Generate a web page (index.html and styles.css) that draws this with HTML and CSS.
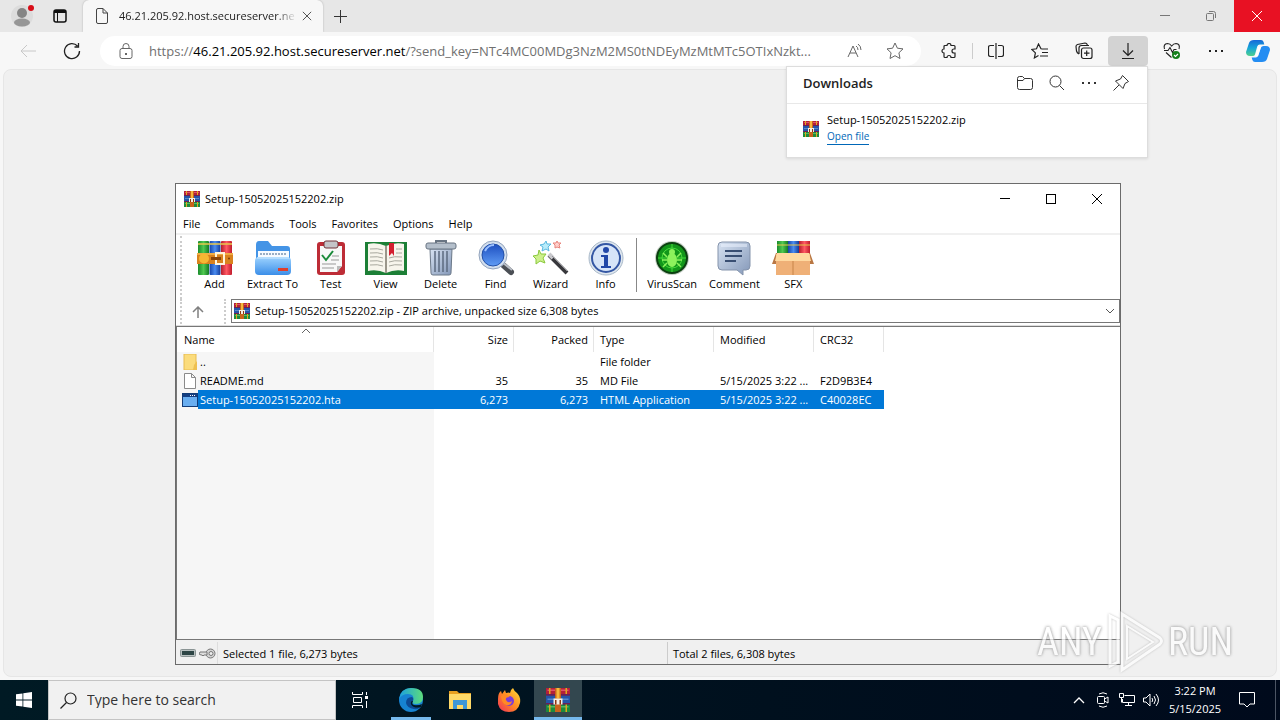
FILE: index.html
```html
<!DOCTYPE html>
<html lang="en">
<head>
    <meta charset="UTF-8">
    <meta name="viewport" content="width=device-width, initial-scale=1.0">
    <title>Setup-15052025152202.zip</title>
    <link rel="stylesheet" href="styles.css">
</head>
<body>

    <!-- Shared icons -->
    <svg class="defs" aria-hidden="true">
        <defs>
            <linearGradient id="gBlue" x1="0" y1="0" x2="0" y2="1"><stop offset="0" stop-color="#9dd3ff"/><stop offset="1" stop-color="#3b8ee8"/></linearGradient>
            <linearGradient id="gSteel" x1="0" y1="0" x2="1" y2="1"><stop offset="0" stop-color="#d8e3f2"/><stop offset="1" stop-color="#8397b8"/></linearGradient>
            <linearGradient id="gLens" x1="0" y1="0" x2="0" y2="1"><stop offset="0" stop-color="#1d4fc0"/><stop offset="1" stop-color="#5f9cf5"/></linearGradient>
            <linearGradient id="gRed" x1="0" y1="0" x2="1" y2="0"><stop offset="0" stop-color="#b51c2c"/><stop offset=".5" stop-color="#ff5964"/><stop offset="1" stop-color="#c01c2c"/></linearGradient>
            <linearGradient id="gGreen" x1="0" y1="0" x2="1" y2="0"><stop offset="0" stop-color="#1a8c2c"/><stop offset=".5" stop-color="#50c850"/><stop offset="1" stop-color="#137a24"/></linearGradient>
            <linearGradient id="gBook" x1="0" y1="0" x2="1" y2="0"><stop offset="0" stop-color="#1644a8"/><stop offset=".5" stop-color="#4a8cf0"/><stop offset="1" stop-color="#143c98"/></linearGradient>
            <linearGradient id="gEdge" x1="0" y1="0" x2="1" y2="0"><stop offset="0" stop-color="#1a9fe0"/><stop offset="1" stop-color="#5ddc7c"/></linearGradient>
            <linearGradient id="gFire" x1="1" y1="0" x2="0" y2="1"><stop offset="0" stop-color="#ffe23a"/><stop offset=".5" stop-color="#ff8a22"/><stop offset="1" stop-color="#f02c5c"/></linearGradient>
            <linearGradient id="gPilot" x1="0" y1="0" x2="0" y2="1"><stop offset="0" stop-color="#1668d8"/><stop offset=".5" stop-color="#16a6d8"/><stop offset="1" stop-color="#4fd08c"/></linearGradient>
        </defs>
        <symbol id="rar" viewBox="0 0 16 16">
            <path fill="#b3203a" d="M0 0h16v5H0z"/><path fill="#e0526a" d="M1 1h14v1H1z"/>
            <path fill="#2455a8" d="M0 5h16v6H0z"/><path fill="#5a87cc" d="M1 7h14v1H1z"/>
            <path fill="#1d8a3c" d="M0 11h16v5H0z"/><path fill="#55b860" d="M1 12h14v1H1z"/>
            <path fill="#6b1f56" d="M0 4h16v1H0zM0 10h16v1H0z"/>
            <path fill="#e0a81c" d="M2 0h1v4H2zM13 0h1v4h-1zM2 11h1v5H2zM13 11h1v5h-1z"/>
            <path fill="#c8641c" d="M6 0h4v16H6z"/><path fill="#f6b83c" d="M7 0h2v7H7z"/>
            <path fill="#f4efe4" d="M5 7h6v4H5z"/><path fill="#8a3410" d="M6 8h1v3H6zM9 8h1v3H9z"/>
        </symbol>
        <symbol id="close" viewBox="0 0 12 12"><path d="M1 1l10 10M11 1L1 11" fill="none" stroke="currentColor"/></symbol>
        <symbol id="minimize" viewBox="0 0 12 12"><path d="M1 5.500h10" fill="none" stroke="currentColor"/></symbol>
        <symbol id="dots" viewBox="0 0 14 14"><path d="M0 6h2v2H0zM6 6h2v2H6zM12 6h2v2h-2z" fill="currentColor"/></symbol>
        <symbol id="loupe" viewBox="0 0 16 16"><path d="M1 6.500a5.500 5.500 0 1 0 11 0 5.500 5.500 0 1 0-11 0M10.500 10.500L15 15" fill="none" stroke="currentColor"/></symbol>
    </svg>

    <!-- Browser -->
    <div class="browser">
        <header class="tab-bar">
            <button class="profile" aria-label="Profile">
                <svg width="24" height="24" viewBox="0 0 24 24"><circle cx="12" cy="12" r="11" fill="#dcdcdc"/><circle cx="12" cy="9" r="5" fill="#858585"/><ellipse cx="12" cy="18.500" rx="8" ry="4" fill="#969696"/><circle cx="21" cy="4" r="3" fill="#d80d18"/></svg>
            </button>
            <button class="workspaces" aria-label="Tab actions">
                <svg width="14" height="14" viewBox="0 0 14 14"><rect x="1" y="1" width="12" height="12" rx="2" fill="none" stroke="#111" stroke-width="1.500"/><path d="M1 1h12v3H1z" fill="#111"/><path d="M4.500 4v9" stroke="#111"/></svg>
            </button>
            <div class="tab">
                <svg width="12" height="16" viewBox="0 0 12 16"><path d="M2 .5h5L11.500 5v9q0 1.500-1.500 1.500H2q-1.500 0-1.500-1.500V2Q.5.5 2 .5zM7 .5V5h4.500" fill="none" stroke="#444"/></svg>
                <span class="tab-title">46.21.205.92.host.secureserver.ne</span>
                <button class="tab-close" aria-label="Close tab"><svg width="10" height="10"><use href="#close"/></svg></button>
            </div>
            <button class="new-tab" aria-label="New tab"><svg width="13" height="13" viewBox="0 0 13 13"><path d="M6.500 0v13M0 6.500h13" stroke="#333"/></svg></button>
            <div class="window-buttons">
                <button aria-label="Minimize"><svg width="12" height="12"><use href="#minimize"/></svg></button>
                <button aria-label="Restore"><svg width="10" height="10" viewBox="0 0 10 10" fill="none" stroke="currentColor"><rect x=".5" y="2.500" width="7" height="7" rx="1"/><path d="M3 .5h4.500q2 0 2 2V7"/></svg></button>
                <button class="close-red" aria-label="Close"><svg width="12" height="12"><use href="#close"/></svg></button>
            </div>
        </header>

        <nav class="toolbar">
            <button class="tool back" aria-label="Back" disabled><svg width="16" height="14" viewBox="0 0 16 14" fill="none" stroke="currentColor"><path d="M16 7H1M7 1L1 7l6 6"/></svg></button>
            <button class="tool reload" aria-label="Reload"><svg width="18" height="18" viewBox="0 0 18 18" fill="none" stroke="currentColor" stroke-width="1.300"><path d="M16.500 9A7.500 7.500 0 1 1 14.500 4M15.500 1v4h-4"/></svg></button>
            <div class="address">
                <svg width="14" height="16" viewBox="0 0 14 16" fill="none" stroke="#666"><rect x="1" y="5.500" width="12" height="10" rx="2"/><path d="M4 5.500V3.500a3 3 0 0 1 6 0v2"/><path d="M6 10h2v2H6z" fill="#666" stroke="none"/></svg>
                <a class="url" href="#">https://<b>46.21.205.92.host.secureserver.net</b>/?send_key=NTc4MC00MDg3NzM2MS0tNDEyMzMtMTc5OTIxNzkt...</a>
                <button class="in-address" aria-label="Read aloud"><svg width="16" height="16" viewBox="0 0 16 16" fill="none" stroke="#666"><path d="M1 14L6 3l5 11M3 10h6M9 3q2 1 2 4M11 1q3 2 3 6"/></svg></button>
                <button class="in-address" aria-label="Add to favorites"><svg width="18" height="18" viewBox="0 0 18 18" fill="none" stroke="#666"><path d="M9 1l2.400 5.200 5.600.7-4.100 3.900 1.100 5.700L9 13.700l-5 2.800 1.100-5.700L1 6.900l5.600-.7z"/></svg></button>
            </div>
            <button class="tool" aria-label="Extensions"><svg width="16" height="16" viewBox="0 0 16 16" fill="none" stroke="currentColor" stroke-width="1.200"><path d="M4 2.500h2a2 2 0 0 1 4 0h3q1 0 1 1V6h-1a2 2 0 0 0 0 4h1v3.500q0 1-1 1h-3a2 2 0 0 0-4 0H4q-1 0-1-1V10a2 2 0 0 1 0-4V3.500q0-1 1-1z"/></svg></button>
            <span class="divider"></span>
            <button class="tool" aria-label="Split screen"><svg width="16" height="16" viewBox="0 0 16 16" fill="none" stroke="currentColor" stroke-width="1.200"><path d="M6 2.500H2.500Q.5 2.500.5 4.500v7q0 2 2 2H6M10 2.500h3.500q2 0 2 2v7q0 2-2 2H10M8 0v16"/></svg></button>
            <button class="tool" aria-label="Favorites"><svg width="18" height="16" viewBox="0 0 18 16" fill="none" stroke="currentColor" stroke-width="1.200"><path d="M11 6l-1-.2L7.500 1 5.500 5.800.8 6.500l3.600 3.400-1 5L7.500 12.500M11 6h6M11 9.500h6M9 13h8"/></svg></button>
            <button class="tool" aria-label="Collections"><svg width="18" height="18" viewBox="0 0 18 18" fill="none" stroke="currentColor" stroke-width="1.200"><rect x="6.500" y="6" width="10.500" height="10.500" rx="2"/><path d="M11.700 8.500v5.500M9 11.200h5.500M4 12Q2 11 1.500 9L1 4.500q0-1.500 1.500-2L10 1q2 0 2.500 2.500M4 12V6q0-2.500 2.500-2.500H14"/></svg></button>
            <button class="tool active" aria-label="Downloads"><svg width="14" height="18" viewBox="0 0 14 18" fill="none" stroke="currentColor" stroke-width="1.200"><path d="M7 1v12M2 8.500l5 5 5-5M1 16.500h12"/></svg></button>
            <button class="tool" aria-label="Browser essentials"><svg width="18" height="18" viewBox="0 0 18 18" fill="none" stroke="currentColor" stroke-width="1.100"><path d="M1.500 7Q0 2 4.500 1.500 7 1.500 8.700 4 10.500 1.500 13 1.500 17.500 2 16 7M1 8.500h4l2-3 2.500 5 1.500-3h2.500M3 10.500l5.500 5"/><circle cx="13" cy="13" r="4" fill="#15801c" stroke="none"/><path d="M11 13l1.500 1.500L15 12" stroke="#fff"/></svg></button>
            <button class="tool" aria-label="Settings and more"><svg width="14" height="14"><use href="#dots"/></svg></button>
            <button class="tool" aria-label="Copilot"><svg width="24" height="24" viewBox="0 0 24 24"><path d="M8 1h7q2 0 2.600 2l.7 2.500h-4.500q-2 0-2.600 2L9 15.500Q8.400 17 6.500 17H4Q0 17 0 13L3 4Q4 1 8 1z" fill="url(#gPilot)"/><path d="M16 23H9q-2 0-2.600-2l-.7-2.500h4q2 0 2.600-2L15 8.500Q15.600 7 17.500 7H20q4 0 4 4l-3 9q-1 3-5 3z" fill="#248df2"/><path d="M12 8h3l-3 9H9z" fill="#fff" opacity=".8"/></svg></button>
        </nav>

        <main class="page"></main>
    </div>

    <!-- Downloads flyout -->
    <section class="downloads">
        <div class="downloads-head">
            <h2>Downloads</h2>
            <button aria-label="Open downloads folder"><svg width="16" height="14" viewBox="0 0 16 14" fill="none" stroke="currentColor"><path d="M.5 2.500q0-2 2-2h3l2 2h6q2 0 2 2v7q0 2-2 2h-11q-2 0-2-2zM.5 4.500H6l1.500-2"/></svg></button>
            <button aria-label="Search downloads"><svg width="16" height="16"><use href="#loupe"/></svg></button>
            <button aria-label="More options"><svg width="14" height="14"><use href="#dots"/></svg></button>
            <button aria-label="Pin downloads"><svg width="16" height="16" viewBox="0 0 16 16" fill="none" stroke="currentColor"><path d="M9.500.5l6 6-3.500 2-2 5L2.500 6l5-2zM6 10L.5 15.500"/></svg></button>
        </div>
        <div class="download-item">
            <svg width="16" height="16"><use href="#rar"/></svg>
            <div>
                <p>Setup-15052025152202.zip</p>
                <a href="#">Open file</a>
            </div>
        </div>
    </section>

    <!-- Archive window -->
    <section class="archive">
        <div class="title-bar">
            <svg width="16" height="16"><use href="#rar"/></svg>
            <span>Setup-15052025152202.zip</span>
            <div class="window-buttons">
                <button aria-label="Minimize"><svg width="12" height="12"><use href="#minimize"/></svg></button>
                <button aria-label="Maximize"><svg width="10" height="10" viewBox="0 0 10 10"><rect x=".5" y=".5" width="9" height="9" fill="none" stroke="currentColor"/></svg></button>
                <button aria-label="Close"><svg width="12" height="12"><use href="#close"/></svg></button>
            </div>
        </div>
        <div class="menu">
            <button>File</button><button>Commands</button><button>Tools</button><button>Favorites</button><button>Options</button><button>Help</button>
        </div>
        <div class="bands">
            <div class="actions">
                <button>
                    <svg width="36" height="36" viewBox="0 0 36 36"><rect x="1" y="1" width="11" height="34" rx="1" fill="url(#gGreen)"/><rect x="12.500" y="1" width="11" height="34" rx="1" fill="url(#gBook)"/><rect x="24" y="1" width="11" height="34" rx="1" fill="url(#gRed)"/><path d="M1 4h34" stroke="#e8c84c" stroke-width="1.500"/><path d="M0 13h36v11H0z" fill="#d9821e"/><path d="M0 13h36v2H0z" fill="#f0ac44"/><circle cx="7" cy="18.500" r="5" fill="#f7b733"/><rect x="19" y="13" width="8" height="11" fill="none" stroke="#fff4dc" stroke-width="2"/><path d="M14 17h10v3H14z" fill="#8a4408"/><circle cx="32" cy="18.500" r="1" fill="#7a3c08"/></svg>
                    Add
                </button>
                <button>
                    <svg width="38" height="36" viewBox="0 0 38 36"><path d="M2 5q0-4 3-4h9l4 5h15q3 0 3 3v20H2z" fill="#4494e6"/><path d="M4 11h31v10H4z" fill="#f7fbff"/><path d="M6 14h27" stroke="#9aaec4" stroke-width="2" stroke-dasharray="2 1"/><rect x="1" y="17" width="36" height="18" rx="4" fill="url(#gBlue)"/><path d="M3 18h32" stroke="#d2ecff"/><rect x="24" y="28" width="10" height="3" fill="#df3f2c"/></svg>
                    Extract To
                </button>
                <button>
                    <svg width="30" height="36" viewBox="0 0 30 36"><rect x="1" y="2" width="28" height="33" rx="3" fill="#bd2c36"/><path d="M4 6h22v20l-5 6H4z" fill="#f8f8f8"/><path d="M26 26l-5 6v-6z" fill="#bbb"/><rect x="8" y="1" width="14" height="7" rx="2" fill="#c4c4c8" stroke="#70353a"/><path d="M6 15l4 5 7-9" fill="none" stroke="#1a8a3a" stroke-width="2"/><path d="M16 16h7M15 20h8M6 24h14M6 28h12" stroke="#999"/></svg>
                    Test
                </button>
                <button>
                    <svg width="44" height="36" viewBox="0 0 44 36"><path d="M1 2h42v33H1z" fill="#1c7f36"/><path d="M4 4q9-2 18 2 9-4 18-2v27q-9-2-18 2-9-4-18-2z" fill="#f7f5ec"/><path d="M22 6v27" stroke="#9a968a" stroke-width="2"/><path d="M6 9q8-1 13 1M6 13q8-1 13 1M6 17q8-1 13 1M6 21q8-1 13 1M6 25q8-1 13 1M38 9q-4 0-6 0M38 13q-4 0-6 0M38 17q-8-1-13 1M38 21q-8-1-13 1M38 25q-8-1-13 1" fill="none" stroke="#a8a89e"/><path d="M25 3h5v13l-2-3-3 3z" fill="#d32030"/></svg>
                    View
                </button>
                <button>
                    <svg width="32" height="36" viewBox="0 0 32 36"><path d="M5 9h22l-1 24q0 2-2 2H8q-2 0-2-2z" fill="url(#gSteel)" stroke="#6b7888"/><path d="M10 11v21M14 11v21M18 11v21M22 11v21" stroke="#5c6b80" stroke-width="1.500"/><rect x="1" y="3" width="30" height="6" rx="2" fill="#b4bfcb" stroke="#697583"/><path d="M11 3V1h10v2" fill="none" stroke="#697583" stroke-width="2"/></svg>
                    Delete
                </button>
                <button>
                    <svg width="38" height="36" viewBox="0 0 38 36"><path d="M25 24l9 8" stroke="#4b4f55" stroke-width="6" stroke-linecap="round"/><path d="M25 22l10 8" stroke="#b9bec6" stroke-width="2"/><circle cx="16" cy="15" r="14" fill="#d3dfee" stroke="#93a4bd"/><circle cx="16" cy="15" r="11" fill="url(#gLens)" stroke="#2350a8"/><path d="M8 11q3-6 9-6" fill="none" stroke="#9bc0ff" stroke-width="2"/></svg>
                    Find
                </button>
                <button>
                    <svg width="36" height="36" viewBox="0 0 36 36"><path d="M16 15l18 18" stroke="#38383c" stroke-width="4"/><path d="M16 14l4 4" stroke="#c8c8cc" stroke-width="4"/><path d="M19 16l15 15" stroke="#909094"/><path d="M6 10l2 4 5 0-3 4 2 5-5-2-4 3 0-5-3-3 5-1z" fill="#cdf08c" stroke="#8ac83c"/><path d="M13 1l1 3 4 0-3 3 1 4-3-2-4 2 1-4-3-2 4-1z" fill="#b8ecfa" stroke="#5ab8e0"/><path d="M24 1l1 2h3l-2 2 1 3-3-1-2 1v-3l-2-2h3z" fill="#ffd0cc" stroke="#e8847c"/></svg>
                    Wizard
                </button>
                <button>
                    <svg width="36" height="36" viewBox="0 0 36 36"><circle cx="18" cy="18" r="17" fill="#dfe7ef" stroke="#a8b8c8"/><circle cx="18" cy="18" r="14" fill="#d6e4f8" stroke="#3457a4" stroke-width="2"/><circle cx="18" cy="10" r="3" fill="#2147a8"/><path d="M13 15h7v11h3v2H13v-2h3v-9h-3z" fill="#2147a8"/></svg>
                    Info
                </button>
                <span class="rule"></span>
                <button>
                    <svg width="36" height="36" viewBox="0 0 36 36"><circle cx="18" cy="18" r="17" fill="#c4ccc4"/><circle cx="18" cy="18" r="15" fill="#12961a" stroke="#0b4010" stroke-width="2"/><circle cx="18" cy="18" r="10" fill="none" stroke="#46d93c"/><path d="M18 4v28M4 18h28" stroke="#46d93c"/><ellipse cx="18" cy="20" rx="5" ry="7" fill="#8cf25c"/><circle cx="18" cy="12" r="3" fill="#8cf25c"/><path d="M13 17l-4-4M23 17l4-4M13 20H8M23 20h5M13 23l-4 4M23 23l4 4" stroke="#8cf25c" stroke-width="1.500"/></svg>
                    VirusScan
                </button>
                <button>
                    <svg width="34" height="36" viewBox="0 0 34 36"><path d="M5 2h24q4 0 4 4v20q0 4-4 4h-3v5l-6-5H5q-4 0-4-4V6q0-4 4-4z" fill="url(#gSteel)" stroke="#8493ab"/><path d="M4 4h26v3H4z" fill="#edf4ff" opacity=".5"/><path d="M8 11h17M8 16h17M8 21h11" stroke="#394e72" stroke-width="2"/></svg>
                    Comment
                </button>
                <button>
                    <svg width="42" height="36" viewBox="0 0 42 36"><path d="M5 1h11v13H5z" fill="url(#gGreen)"/><path d="M16 1h11v13H16z" fill="url(#gBook)"/><path d="M27 1h11v13H27z" fill="url(#gRed)"/><path d="M5 5h33" stroke="#e8c84c"/><path d="M4 13h34l4 11h-4L37 14 5 14 4 24H0z" fill="#b97744"/><path d="M4 14h34v21H4z" fill="#efb077"/><path d="M5 13h32l2 8H3z" fill="#ffd9a0"/><path d="M21 21v14" stroke="#c88448"/></svg>
                    SFX
                </button>
            </div>
            <div class="path-row">
                <button class="up" aria-label="Up one level"><svg width="12" height="12" viewBox="0 0 12 12" fill="none" stroke="#808080" stroke-width="1.500"><path d="M6 12V1M1 6l5-5 5 5"/></svg></button>
                <div class="path">
                    <svg width="16" height="16"><use href="#rar"/></svg>
                    <select aria-label="Current path"><option>Setup-15052025152202.zip - ZIP archive, unpacked size 6,308 bytes</option></select>
                    <svg width="10" height="6" viewBox="0 0 10 6"><path d="M1 1l4 4 4-4" fill="none" stroke="#555"/></svg>
                </div>
            </div>
        </div>
        <div class="list">
            <table>
                <colgroup><col class="c-name"><col class="c-size"><col class="c-size"><col class="c-type"><col class="c-date"><col class="c-crc"></colgroup>
                <thead>
                    <tr><th>Name<svg class="sort" width="10" height="6" viewBox="0 0 10 6"><path d="M1 5l4-4 4 4" fill="none" stroke="#666"/></svg></th><th class="num">Size</th><th class="num">Packed</th><th>Type</th><th>Modified</th><th>CRC32</th></tr>
                </thead>
                <tbody>
                    <tr>
                        <td><span class="file"><svg width="16" height="16" viewBox="0 0 16 16"><path d="M2 0h12v16H2z" fill="#fbdc7c" stroke="#e8bc50"/><path d="M12 11l3-4v9h-4z" fill="#eec050"/></svg><span class="file-name">..</span></span></td>
                        <td></td><td></td><td>File folder</td><td></td><td></td>
                    </tr>
                    <tr>
                        <td><span class="file"><svg width="16" height="16" viewBox="0 0 16 16"><path d="M2.500.5h7l4 4v11h-11zM9.500.5v4h4" fill="#fff" stroke="#8a8a8a"/></svg><span class="file-name">README.md</span></span></td>
                        <td class="num">35</td><td class="num">35</td><td>MD File</td><td>5/15/2025 3:22 ...</td><td>F2D9B3E4</td>
                    </tr>
                    <tr class="selected">
                        <td><span class="file"><svg width="16" height="14" viewBox="0 0 16 14"><rect x=".5" y=".5" width="15" height="13" fill="#69aef0" stroke="#123c78"/><path d="M1 1h14v3H1z" fill="#153f82"/><path d="M8 2h1v1H8zM10 2h1v1h-1zM12 2h1v1h-1z" fill="#fff"/></svg><span class="file-name">Setup-15052025152202.hta</span></span></td>
                        <td class="num">6,273</td><td class="num">6,273</td><td>HTML Application</td><td>5/15/2025 3:22 ...</td><td>C40028EC</td>
                    </tr>
                </tbody>
            </table>
        </div>
        <footer class="status">
            <div class="status-icons">
                <svg width="16" height="8" viewBox="0 0 16 8"><rect x=".5" y=".5" width="15" height="7" rx="1" fill="#b8c0c0" stroke="#8a9494"/><path d="M2 2h12v4H2z" fill="#2c4444"/></svg>
                <svg width="17" height="11" viewBox="0 0 17 11"><circle cx="11.500" cy="5.500" r="4.500" fill="#d4d4d4" stroke="#777"/><circle cx="12" cy="5.500" r="2" fill="#eee" stroke="#777"/><path d="M8 4H1L0 6l2 1h1l1 1 1-1h3z" fill="#ddd" stroke="#777"/></svg>
            </div>
            <span class="status-left">Selected 1 file, 6,273 bytes</span>
            <span class="status-right">Total 2 files, 6,308 bytes</span>
        </footer>
    </section>

    <!-- Watermark -->
    <div class="watermark">
        <span>ANY</span>
        <svg width="58" height="64" viewBox="0 0 58 64" fill="none" stroke="#fff"><path d="M4 56V6l8 4v42zM16 4l38 24q3 3 0 6L16 60z" stroke-width="3"/><path d="M21 16l26 16-26 17z" stroke-width="2"/></svg>
        <span>RUN</span>
    </div>

    <!-- Taskbar -->
    <footer class="taskbar">
        <button class="start" aria-label="Start"><svg width="16" height="16" viewBox="0 0 16 16" fill="#fff"><path d="M0 2.300L6.500 1.400v6.200H0zM7.300 1.300L16 0v7.600H7.300zM0 8.400h6.500v6.200L0 13.700zM7.300 8.400H16V16l-8.700-1.300z"/></svg></button>
        <label class="search">
            <svg width="17" height="17" viewBox="0 0 17 17" fill="none" stroke="#222" stroke-width="1.200"><circle cx="10.500" cy="6.500" r="5.500"/><path d="M6.500 10.500L.5 16.500"/></svg>
            <input type="text" placeholder="Type here to search" aria-label="Type here to search">
        </label>
        <button class="app" aria-label="Task view"><svg width="16" height="16" viewBox="0 0 16 16" fill="none" stroke="#fff"><path d="M.5 0v2.500h10V0M.5 16v-2.500h10V16M1.500 5.500h8v5h-8zM14.500 0v3M14.500 9v7"/><path d="M13 4h3v3h-3z" fill="#fff" stroke="none"/></svg></button>
        <button class="app running" aria-label="Edge"><svg width="24" height="24" viewBox="0 0 24 24"><circle cx="12" cy="12" r="12" fill="#1683d2"/><path d="M0 11Q2 0 12 0q12 0 12 9 0 7-7 7-5 0-3-3 2-7-5-7-6 0-9 5z" fill="url(#gEdge)"/><path d="M7 15q0-6 6-6 2 1 1 4-2 3 1 4 4 1 8 0-3 5-8 4-7-1-8-6z" fill="#0d4a94"/><path d="M14 13q-2 3 1 4 4 1 8-1l-1 3q-4 1-7 0-4-2-3-5 0-1 2-1z" fill="#001a24"/></svg></button>
        <button class="app" aria-label="File Explorer"><svg width="22" height="20" viewBox="0 0 22 20"><path d="M0 1h8l2 2h12v5H0z" fill="#e8a020"/><path d="M0 4h22v15H0z" fill="#ffd968"/><path d="M4 10h14v9h-4v-4H8v4H4z" fill="#3e97d8"/><path d="M8 15h6v4H8z" fill="#ffd968"/></svg></button>
        <button class="app" aria-label="Firefox"><svg width="24" height="24" viewBox="0 0 24 24"><path d="M1 11Q1 5 4 3l1 3 3-4 1 3q3-1 4 0 0-3 3-5 1 3 4 5 4 4 3 10-2 9-11 9T1 16z" fill="url(#gFire)"/><circle cx="12" cy="13" r="5" fill="#7b3cd8"/><path d="M4 8q5-3 9 1-5 0-4 3 2 4 6 1-1 5-6 4-4-1-5-9z" fill="#ff8a24"/></svg></button>
        <button class="app running current" aria-label="WinRAR"><svg width="24" height="24"><use href="#rar"/></svg></button>
        <div class="tray">
            <button aria-label="Show hidden icons"><svg width="12" height="8" viewBox="0 0 12 8" fill="none" stroke="#fff" stroke-width="1.300"><path d="M1 7l5-5 5 5"/></svg></button>
            <button aria-label="Meet now"><svg width="12" height="16" viewBox="0 0 12 16" fill="none" stroke="#fff"><rect x=".5" y="4.500" width="7" height="7" rx="1"/><path d="M7.500 7l3.500-2v6l-3.500-2M2 2q4-2.500 8 0M2 14q4 2.500 8 0"/></svg></button>
            <button aria-label="Network"><svg width="16" height="14" viewBox="0 0 16 14" fill="none" stroke="#fff"><path d="M5.500 2.500h10v7h-12V6M9.500 9.500v3M6 12.500h7M.5.5h4v4h-4zM2.500 4.500v5"/></svg></button>
            <button aria-label="Volume"><svg width="17" height="14" viewBox="0 0 17 14" fill="none" stroke="#fff"><path d="M.5 5h2.500l4-4v12l-4-4H.5zM9 5q1.500 2 0 4M11 3q3 4 0 8M13 1q5 6 0 12"/></svg></button>
            <button class="clock"><span>3:22 PM</span><span>5/15/2025</span></button>
            <button class="notify" aria-label="Notifications"><svg width="16" height="16" viewBox="0 0 16 16" fill="none" stroke="#fff"><path d="M.5.5h15v11.500H11l-3 3-3-3H.5z"/></svg></button>
        </div>
    </footer>

</body>
</html>
```
FILE: styles.css
```css
* {
    margin: 0;
    padding: 0;
    box-sizing: border-box;
}

body {
    height: 100vh;
    display: flex;
    flex-direction: column;
    position: relative;
    overflow: hidden;
    background: #f7f7f7;
    color: #000;
    font-family: "Open Sans", "Noto Sans", sans-serif;
    font-size: 11px;
    line-height: 16px;
}

button, input, select {
    font: inherit;
    color: inherit;
    background: none;
    border: none;
    outline: none;
}

button {
    display: flex;
    align-items: center;
    justify-content: center;
}

svg {
    flex-shrink: 0;
}

.defs {
    position: absolute;
    width: 0;
    height: 0;
}

/* Browser */
.browser {
    flex: 1;
    display: flex;
    flex-direction: column;
    min-height: 0;
}

.tab-bar {
    display: flex;
    height: 32px;
    background: #e7e7e7;
}

.profile {
    width: 44px;
}

.workspaces {
    width: 32px;
}

.tab {
    display: flex;
    align-items: center;
    width: 240px;
    margin-left: 7px;
    padding: 0 6px 0 13px;
    background: #f7f7f7;
    border-radius: 6px 6px 0 0;
    box-shadow: 0 0 2px #aaa;
    clip-path: inset(0 -3px);
}

.tab-title {
    flex: 1;
    margin: 0 0 0 11px;
    white-space: nowrap;
    color: #222;
    mask-image: linear-gradient(to right, #000 88%, transparent);
}

.tab-close {
    width: 20px;
    height: 20px;
    color: #333;
}

.new-tab {
    width: 34px;
}

.window-buttons {
    display: flex;
    margin-left: auto;
}

.window-buttons button {
    width: 46px;
    color: #777;
}

.window-buttons .close-red {
    background: #e81123;
    color: #fff;
}

.toolbar {
    display: flex;
    align-items: center;
    gap: 4px;
    height: 36px;
    padding: 2px 2px 0 8px;
    background: #f7f7f7;
}

.tool {
    width: 40px;
    height: 30px;
    border-radius: 4px;
    color: #222;
}

.tool:last-child {
    margin-left: -2px;
}

.back {
    color: #c8c8c8;
}

.tool.active {
    background: #d3d3d3;
}

.address {
    flex: 1;
    display: flex;
    align-items: center;
    height: 30px;
    min-width: 0;
    margin: 0 4px;
    padding: 0 6px 0 19px;
    background: #fff;
    border-radius: 15px;
}

.url {
    flex: 1;
    margin: 0 4px 0 16px;
    overflow: hidden;
    white-space: nowrap;
    font-size: 13px;
    line-height: 20px;
    color: #707070;
    text-decoration: none;
}

.url b {
    font-weight: normal;
    color: #000;
}

.in-address {
    width: 40px;
    height: 28px;
}

.divider {
    width: 1px;
    height: 16px;
    margin: 0 -1px;
    background: #ccc;
}

.page {
    flex: 1;
    margin: 1px 3px 3px;
    background: #f0f0f0;
    border: 1px solid #e6e6e6;
    border-radius: 8px;
}

/* Downloads */
.downloads {
    position: absolute;
    top: 66px;
    right: 132px;
    width: 362px;
    background: #fff;
    border: 1px solid #ddd;
    box-shadow: 0 1px 3px rgba(0, 0, 0, 0.1);
}

.downloads-head {
    display: flex;
    align-items: center;
    height: 37px;
    padding: 0 10px 4px 16px;
    border-bottom: 1px solid #e8e8e8;
    color: #333;
}

.downloads-head h2 {
    flex: 1;
    font-size: 13px;
    font-weight: 600;
    color: #222;
}

.downloads-head button {
    width: 32px;
    height: 28px;
}

.download-item {
    display: flex;
    align-items: center;
    gap: 8px;
    padding: 8px 16px 12px;
}

.download-item a {
    display: inline-block;
    font-size: 10px;
    color: #0067b8;
    text-decoration: none;
    border-bottom: 1px solid #0067b8;
}

/* Archive window */
.archive {
    position: absolute;
    top: 183px;
    right: 159px;
    bottom: 55px;
    left: 175px;
    display: flex;
    flex-direction: column;
    background: #fff;
    border: 1px solid #6b6b6b;
}

.title-bar {
    display: flex;
    align-items: center;
    height: 29px;
    padding-left: 8px;
}

.title-bar span {
    margin-left: 5px;
}

.title-bar .window-buttons {
    height: 28px;
}

.title-bar .window-buttons button {
    color: #000;
}

.menu {
    display: flex;
    gap: 15px;
    height: 22px;
    padding: 1px 0 0 7px;
    border-bottom: 2px solid #f0f0f0;
}

.bands {
    padding: 1px 0 1px 4px;
    border-bottom: 1px solid #ddd;
}

.actions {
    display: flex;
    height: 63px;
    padding-left: 5px;
    border-left: 2px dotted #ccc;
}

.actions button {
    flex-direction: column;
    justify-content: flex-start;
    min-width: 55px;
    padding: 4px 5px 0;
}

.actions .rule ~ button {
    padding: 4px 6px 0;
}

.rule {
    width: 1px;
    height: 54px;
    margin: 2px 4px 0 3px;
    background: #888;
}

.path-row {
    display: flex;
    height: 25px;
    border-left: 2px dotted #ccc;
}

.up {
    width: 44px;
    padding-right: 10px;
    border-right: 2px dotted #ccc;
}

.path {
    flex: 1;
    display: flex;
    align-items: center;
    height: 24px;
    margin-left: 5px;
    padding: 0 4px 0 2px;
    border: 1px solid #777;
}

.path select {
    flex: 1;
    height: 20px;
    margin-left: 5px;
    appearance: none;
}

/* File list */
.list {
    flex: 1;
    min-height: 0;
    border-top: 1px solid #777;
    border-bottom: 1px solid #777;
    border-left: 1px solid #777;
    background: linear-gradient(#f6f6f6, #f6f6f6) no-repeat 0 25px / 257px 100%;
}

table {
    width: 707px;
    table-layout: fixed;
    border-collapse: separate;
    border-spacing: 0;
}

.c-name { width: 257px; }
.c-size { width: 80px; }
.c-type { width: 120px; }
.c-date { width: 100px; }
.c-crc { width: 70px; }

th {
    position: relative;
    height: 25px;
    padding: 0 5px 0 6px;
    background: #fff;
    border-right: 1px solid #e5e5e5;
    font-weight: normal;
    text-align: left;
}

th:first-child {
    padding-left: 7px;
}

.sort {
    position: absolute;
    top: 1px;
    left: calc(50% - 4px);
}

td {
    height: 19px;
    padding: 0 6px;
    white-space: nowrap;
}

td:first-child {
    padding: 0 0 0 5px;
}

.num {
    text-align: right;
}

.file {
    display: flex;
    align-items: center;
}

.file-name {
    flex: 1;
    padding-left: 2px;
    line-height: 19px;
}

.selected td:not(:first-child),
.selected .file-name {
    background: #0078d7;
    color: #fff;
}

/* Status bar */
.status {
    display: flex;
    height: 24px;
    padding-top: 2px;
    background: #f0f0f0;
    line-height: 23px;
}

.status-icons {
    display: flex;
    align-items: center;
    gap: 3px;
    width: 42px;
    padding-left: 4px;
    border-right: 1px solid #ddd;
}

.status-left {
    flex: 1;
    padding-left: 5px;
}

.status-right {
    width: 48%;
    padding-left: 5px;
    border-left: 1px solid #ccc;
}

/* Watermark */
.watermark {
    position: absolute;
    right: 47px;
    bottom: 46px;
    display: flex;
    align-items: center;
    gap: 4px;
    color: #fff;
    font-family: "Roboto Condensed", "Liberation Sans Narrow", Roboto, sans-serif;
    font-size: 38px;
    line-height: 64px;
    opacity: 0.7;
    text-shadow: 0 0 3px #999;
    filter: drop-shadow(0 0 1px #aaa);
    pointer-events: none;
}

/* Taskbar */
.taskbar {
    display: flex;
    height: 40px;
    background: linear-gradient(to right, #001a24, #00101e 60%, #000a1c);
    color: #fff;
}

.start {
    width: 48px;
}

.search {
    display: flex;
    align-items: center;
    gap: 10px;
    width: 288px;
    padding-left: 11px;
    background: #f1f1f1;
    border: 1px solid #c4c4c4;
}

.search input {
    flex: 1;
    min-width: 0;
    font-size: 14px;
}

.search input::placeholder {
    color: #333;
}

.app {
    width: 48px;
    margin-right: 1px;
    border-top: 3px solid transparent;
    border-bottom: 3px solid transparent;
}

.search + .app {
    margin-right: 3px;
}

.running {
    background: linear-gradient(#76b9ed, #76b9ed) no-repeat center bottom / 40px 3px border-box;
}

.current {
    background: linear-gradient(#76b9ed, #76b9ed) no-repeat bottom / 100% 3px border-box, #33474f;
}

.tray {
    display: flex;
    margin-left: auto;
    margin-right: 4px;
    border-right: 1px solid #4c5564;
}

.tray button {
    width: 24px;
}

.tray .clock {
    width: 64px;
    flex-direction: column;
    line-height: 18px;
}

.tray .notify {
    width: 40px;
    margin-right: 8px;
}
```
